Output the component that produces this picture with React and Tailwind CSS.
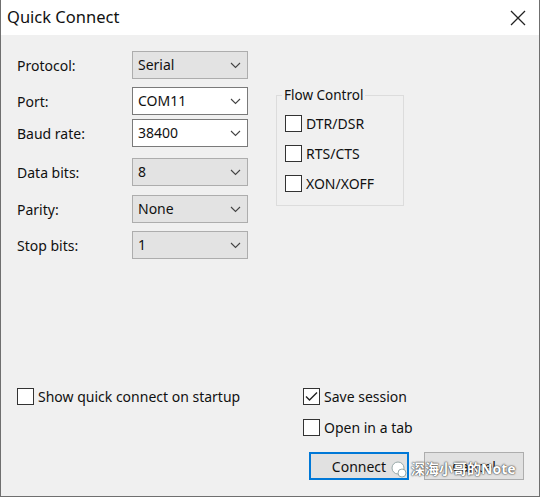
import React from "react";

const font = { fontFamily: '"Noto Sans", "Noto Sans CJK SC", sans-serif' };

function Chevron() {
  return (
    <svg width="11" height="7" viewBox="0 0 11 7" className="shrink-0">
      <polyline points="1,1 5.5,5.5 10,1" fill="none" stroke="#444" strokeWidth="1.1" />
    </svg>
  );
}

function Select({ value, enabled }) {
  return (
    <div
      className={
        "flex h-[28px] w-[116px] items-center justify-between pl-[5px] pr-[6px] text-[14px] text-[#111] " +
        (enabled ? "border border-[#7a7a7a] bg-white" : "border border-[#adadad] bg-[#e3e3e3]")
      }
    >
      <span className="leading-none">{value}</span>
      <Chevron />
    </div>
  );
}

function Row({ label, value, enabled, mt }) {
  return (
    <div className={"flex items-center " + mt}>
      <div className="w-[115px] text-[14px] text-[#111]">{label}</div>
      <Select value={value} enabled={enabled} />
    </div>
  );
}

function Check({ label, checked, mt = "" }) {
  return (
    <div className={"flex items-center gap-[4px] " + mt}>
      <div className="flex h-[17px] w-[17px] items-center justify-center border border-[#333] bg-white">
        {checked && (
          <svg width="15" height="15" viewBox="0 0 15 15">
            <polyline points="2,7.5 5.5,11 13,3.5" fill="none" stroke="#222" strokeWidth="1.4" />
          </svg>
        )}
      </div>
      <span className="text-[14px] leading-none text-[#111]">{label}</span>
    </div>
  );
}

export default function App() {
  return (
    <div className="h-[500px] w-[541px] bg-white" style={font}>
      <div className="flex h-[497px] w-[540px] flex-col border-x border-b border-[#6f6f6f] bg-[#f0f0f0]">
        <div className="flex h-[35px] items-center justify-between bg-white pl-[6px] pr-[13px]">
          <span className="text-[16.5px] text-[#111]">Quick Connect</span>
          <svg width="16" height="16" viewBox="0 0 16 16">
            <path d="M1 1 L15 15 M15 1 L1 15" stroke="#222" strokeWidth="1.3" />
          </svg>
        </div>
        <div className="relative flex flex-1 flex-col">
          <div className="flex pt-[16px]">
            <div className="flex flex-col pl-[16px]">
              <Row label="Protocol:" value="Serial" mt="" />
              <Row label="Port:" value="COM11" enabled mt="mt-[8px]" />
              <Row label="Baud rate:" value="38400" enabled mt="mt-[4px]" />
              <Row label="Data bits:" value="8" mt="mt-[11px]" />
              <Row label="Parity:" value="None" mt="mt-[9px]" />
              <Row label="Stop bits:" value="1" mt="mt-[8px]" />
            </div>
            <fieldset className="ml-[28px] mt-[37px] h-[118px] w-[128px] border border-[#dcdcdc] pl-[8px] pt-[2px]">
              <legend className="ml-[-3px] px-[2px] text-[13.5px] leading-[15px] text-[#111]">Flow Control</legend>
              <Check label="DTR/DSR" mt="mt-[10px]" />
              <Check label="RTS/CTS" mt="mt-[13px]" />
              <Check label="XON/XOFF" mt="mt-[13px]" />
            </fieldset>
          </div>
          <div className="mt-[129px] flex">
            <div className="w-[302px] shrink-0 pl-[16px]">
              <Check label="Show quick connect on startup" />
            </div>
            <div className="flex flex-col">
              <Check label="Save session" checked />
              <Check label="Open in a tab" mt="mt-[14px]" />
              <div className="ml-[6px] mt-[16px] flex gap-[15px]">
                <div className="flex h-[28px] w-[100px] items-center justify-center border-2 border-[#0078d7] bg-[#e1e1e1] text-[14px] text-[#111]">
                  Connect
                </div>
                <div className="flex h-[28px] w-[100px] items-center justify-center border border-[#adadad] bg-[#e1e1e1] text-[14px] text-[#111]">
                  Cancel
                </div>
              </div>
            </div>
          </div>
          <div className="absolute left-[388px] top-[423px] flex items-center gap-[2px]">
            <svg width="20" height="20" viewBox="0 0 20 20">
              <circle cx="9" cy="9" r="6" fill="#fff" stroke="#9aa" strokeWidth="1" />
              <circle cx="13" cy="14" r="4" fill="#fff" stroke="#9aa" strokeWidth="1" />
            </svg>
            <span className="text-[14px] font-bold text-white [text-shadow:0_0_2px_#333,0_0_1px_#333]">深海小哥的Note</span>
          </div>
        </div>
      </div>
    </div>
  );
}
